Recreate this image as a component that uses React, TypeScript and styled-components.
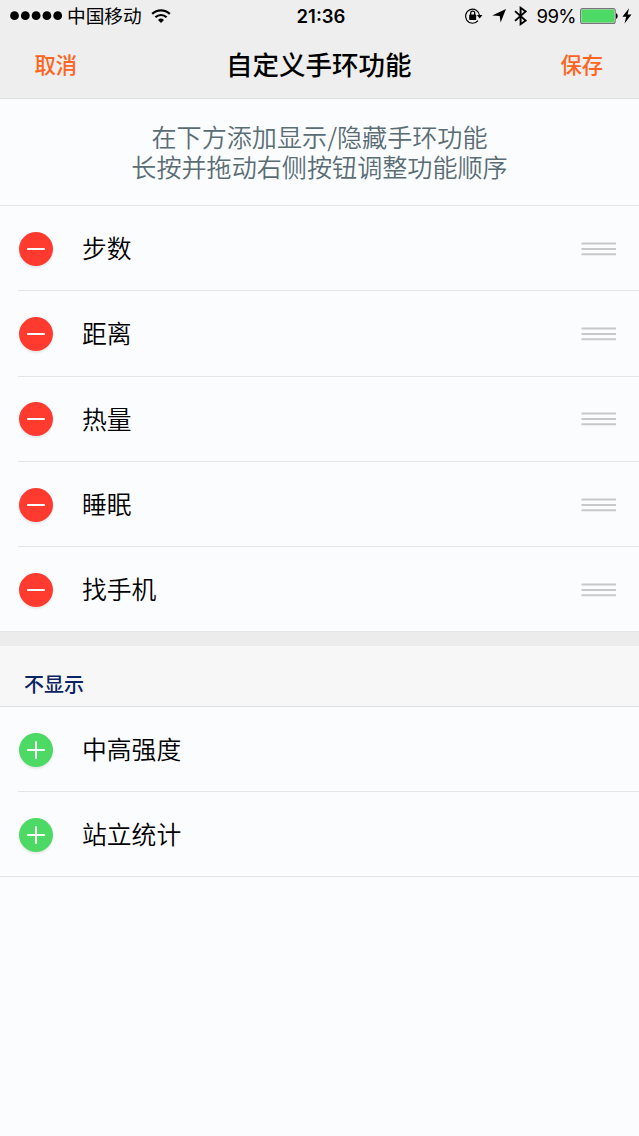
import React from 'react';
import styled, { createGlobalStyle } from 'styled-components';

const GlobalStyle = createGlobalStyle`
  * { box-sizing: border-box; }
  html, body { margin: 0; background: #fbfcfe; }
  body {
    font-family: Inter, "Noto Sans CJK SC", sans-serif;
    color: #000;
  }
  h1, h2, p, ul { margin: 0; padding: 0; font-weight: 400; }
`;

const Screen = styled.div`
  width: 100%;
  min-height: 1136px;
  background: #fbfcfe;
  white-space: nowrap;
`;

const Header = styled.header`
  height: 99px;
  background: #eeeeee;
  border-bottom: 1px solid #dcdddd;
`;

const StatusBar = styled.div`
  height: 32px;
  display: grid;
  grid-template-columns: 1fr auto 1fr;
  align-items: center;
  padding: 0 7px 0 10px;
`;

const StatusSide = styled.div`
  display: flex;
  align-items: center;
  height: 32px;
`;

const StatusRight = styled(StatusSide)`
  justify-content: flex-end;
`;

const Carrier = styled.span`
  font: 400 18.7px/30px "Noto Sans CJK SC", sans-serif;
  height: 32px;
  margin: 0 9px 0 4px;
`;

const Clock = styled.time`
  font-size: 18.5px;
  font-weight: 600;
  line-height: 32px;
`;

const Percent = styled.span`
  font-size: 18.6px;
  line-height: 33px;
  letter-spacing: -0.6px;
  margin: 0 4px 0 9px;
`;

const NavBar = styled.nav`
  height: 64px;
  display: grid;
  grid-template-columns: 1fr auto 1fr;
  align-items: center;
  padding: 0 36px 0 34.5px;
`;

const NavButton = styled.button<{ $end?: boolean }>`
  justify-self: ${(p) => (p.$end ? 'end' : 'start')};
  border: 0;
  padding: 0;
  background: none;
  color: #ff6421;
  font: 500 21.3px/64px "Noto Sans CJK SC", sans-serif;
`;

const Title = styled.h1`
  font: 500 26.5px/64px "Noto Sans CJK SC", sans-serif;
`;

const Intro = styled.p`
  height: 107px;
  padding-top: 23px;
  border-bottom: 1px solid #e2e4e6;
  color: #5a6d75;
  text-align: center;
  font: 350 25.1px/29.5px "Noto Sans CJK SC", sans-serif;
`;

const List = styled.ul`
  list-style: none;
`;

const Row = styled.li<{ $height: number }>`
  height: ${(p) => p.$height}px;
  padding-left: 18px;

  &:last-child { padding-left: 0; }
  &:last-child > div { padding-left: 18px; }
`;

const RowBody = styled.div`
  height: 100%;
  display: flex;
  align-items: center;
  padding: 1px 23px 0 0;
  border-bottom: 1px solid #e2e4e6;
`;

const RoundButton = styled.button<{ $color: string }>`
  width: 34px;
  height: 34px;
  margin-left: 0.6px;
  padding: 0;
  border: 0;
  border-radius: 50%;
  background: ${(p) => p.$color};
  box-shadow: 0 2px 2px rgba(0, 0, 0, 0.08);

  svg { display: block; }
`;

const Label = styled.span`
  flex: 1;
  margin-left: 29.4px;
  padding-bottom: 3px;
  font: 350 24.8px/34px "Noto Sans CJK SC", sans-serif;
`;

const Handle = styled.svg`
  display: block;
`;

const Gap = styled.div`
  height: 14px;
  background: #ececec;
`;

const SectionHeader = styled.h2`
  height: 61px;
  padding: 8px 0 0 24px;
  background: #f7f7f7;
  border-bottom: 1px solid #e0e1e2;
  color: #0c2461;
  font: 500 20px/60px "Noto Sans CJK SC", sans-serif;
`;

const SignalDots = () => (
  <svg width="53" height="12" viewBox="0 0 53 12">
    {[4.5, 15.3, 26.1, 36.9, 47.7].map((x) => (
      <circle key={x} cx={x} cy="5.7" r="4.4" />
    ))}
  </svg>
);

const Wifi = () => (
  <svg width="20" height="15" viewBox="0 0 20 15" fill="none" stroke="#000" strokeWidth="2.2">
    <path d="M1.2 4.9a12.7 12.7 0 0 1 17.6 0" />
    <path d="M4.4 8.3a8 8 0 0 1 11.2 0" />
    <path d="M7 10.9a4.4 4.4 0 0 1 6 0L10 13.9z" fill="#000" stroke="none" />
  </svg>
);

const RotationLock = () => (
  <svg width="19" height="18" viewBox="0 0 19 18" fill="none" stroke="#000">
    <path d="M14 13.6A7 7 0 1 1 15.5 8.6" strokeWidth="1.2" />
    <path d="M12.9 7.9h5.5l-2.7 3.6z" fill="#000" stroke="none" />
    <rect x="5.2" y="7.5" width="7" height="5.4" rx=".6" fill="#000" stroke="none" />
    <path d="M6.7 8V6.1a2 2 0 0 1 4 0V8" strokeWidth="1.3" />
  </svg>
);

const Location = styled.svg`
  margin-left: 9px;
`;

const Bluetooth = styled.svg`
  margin-left: 8px;
`;

const Bolt = styled.svg`
  margin-left: 3px;
`;

const Battery = () => (
  <svg width="39" height="16" viewBox="0 0 39 16">
    <rect x=".6" y=".6" width="34.6" height="14.8" rx="2" fill="#eee" stroke="#77717a" strokeWidth="1.1" />
    <rect x="1.4" y="1.4" width="33" height="13.2" rx="1" fill="#4cd964" />
    <path d="M36 5.2c2.2.5 2.2 5.1 0 5.6z" />
  </svg>
);

const Sign = ({ plus }: { plus?: boolean }) => (
  <svg width="34" height="34" viewBox="0 0 34 34" stroke="#fff" strokeWidth="2">
    <path d={plus ? 'M8.2 17h17.6M17 8.2v17.6' : 'M8.2 17h17.6'} />
  </svg>
);

const shown = ['步数', '距离', '热量', '睡眠', '找手机'];
const hidden = ['中高强度', '站立统计'];

export default function App() {
  return (
    <Screen>
      <GlobalStyle />
      <Header>
        <StatusBar>
          <StatusSide>
            <SignalDots />
            <Carrier>中国移动</Carrier>
            <Wifi />
          </StatusSide>
          <Clock>21:36</Clock>
          <StatusRight>
            <RotationLock />
            <Location width="14" height="14" viewBox="0 0 14 14">
              <path d="M14 0 8.6 13.6 7.7 7 .2 6.4z" />
            </Location>
            <Bluetooth width="13" height="20" viewBox="0 0 13 20" fill="none" stroke="#000" strokeWidth="1.9">
              <path d="m1 5.1 10.6 9.4L6.6 18.2V1.8l5 3.7L1 14.9" />
            </Bluetooth>
            <Percent>99%</Percent>
            <Battery />
            <Bolt width="10" height="16" viewBox="0 0 10 16">
              <path d="M7 .2.4 8.8h3.8L2.5 15.6 9.5 6.4H5.6z" />
            </Bolt>
          </StatusRight>
        </StatusBar>
        <NavBar>
          <NavButton>取消</NavButton>
          <Title>自定义手环功能</Title>
          <NavButton $end>保存</NavButton>
        </NavBar>
      </Header>
      <Intro>
        在下方添加显示/隐藏手环功能
        <br />
        长按并拖动右侧按钮调整功能顺序
      </Intro>
      <List>
        {shown.map((name) => (
          <Row key={name} $height={85.3}>
            <RowBody>
              <RoundButton $color="#ff3b30" aria-label="移除">
                <Sign />
              </RoundButton>
              <Label>{name}</Label>
              <Handle width="35" height="14" viewBox="0 0 35 14" stroke="#c7c8ca" strokeWidth="2">
                <path d="M.5 1.6H35M.5 6.9H35M.5 12.2H35" />
              </Handle>
            </RowBody>
          </Row>
        ))}
      </List>
      <Gap />
      <SectionHeader>不显示</SectionHeader>
      <List>
        {hidden.map((name) => (
          <Row key={name} $height={85}>
            <RowBody>
              <RoundButton $color="#4cd964" aria-label="添加">
                <Sign plus />
              </RoundButton>
              <Label>{name}</Label>
            </RowBody>
          </Row>
        ))}
      </List>
    </Screen>
  );
}
